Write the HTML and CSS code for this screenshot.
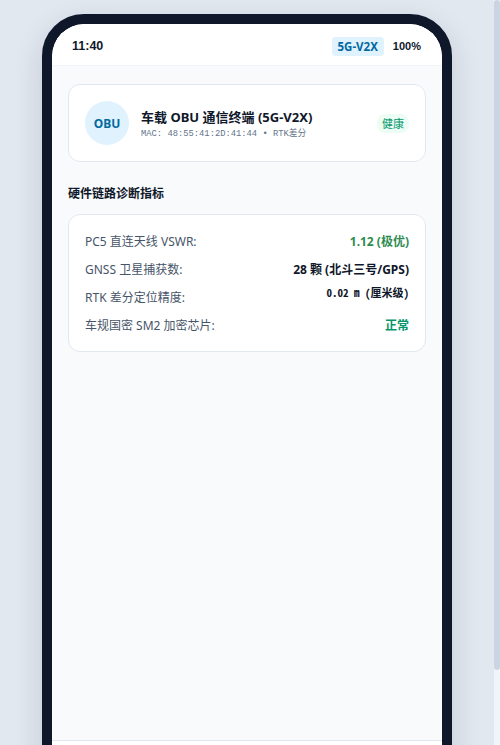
FILE: index.html
```html
<!DOCTYPE html>
<html lang="zh-CN">
<head>
<meta charset="utf-8">
<title>OBU 诊断</title>
<link rel="stylesheet" href="styles.css">
</head>
<body>
<div class="phone">
  <div class="screen">
    <div class="status">
      <span class="time">11:40</span>
      <div class="status-right">
        <span class="net">5G-V2X</span>
        <span class="batt">100%</span>
      </div>
    </div>
    <div class="content">
      <div class="card device">
        <div class="avatar">OBU</div>
        <div class="dev-info">
          <div class="dev-title">车载 OBU 通信终端 (5G-V2X)</div>
          <div class="dev-sub">MAC: 48:55:41:2D:41:44 • RTK差分</div>
        </div>
        <span class="health">健康</span>
      </div>
      <div class="section-title">硬件链路诊断指标</div>
      <div class="card metrics">
        <div class="row"><span class="label">PC5 直连天线 VSWR:</span><span class="val good">1.12 (极优)</span></div>
        <div class="row"><span class="label">GNSS 卫星捕获数:</span><span class="val">28 颗 (北斗三号/GPS)</span></div>
        <div class="row"><span class="label">RTK 差分定位精度:</span><span class="val mono">0.02 m (厘米级)</span></div>
        <div class="row"><span class="label">车规国密 SM2 加密芯片:</span><span class="val ok">正常</span></div>
      </div>
    </div>
    <div class="nav"></div>
  </div>
</div>
<div class="scrollbar"><div class="thumb"></div></div>
</body>
</html>
```
FILE: styles.css
```css
html { scrollbar-width: none; }
::-webkit-scrollbar { display: none; }

body {
  margin: 0;
  padding: 14px 6px 14px 0;
  background: #e2e8f0;
  font-family: "Noto Sans", "Noto Sans CJK SC", sans-serif;
  color: #0f172a;
  display: flex;
  justify-content: center;
}

.scrollbar {
  position: fixed;
  top: 0;
  right: 0;
  width: 6px;
  height: 100vh;
  background: #f1f5f9;
}

.thumb {
  height: 670px;
  background: #cbd5e1;
  border-radius: 3px;
}

.phone {
  width: 390px;
  height: 780px;
  flex: none;
  border: 10px solid #0f172a;
  border-radius: 42px;
  background: #0f172a;
  box-shadow: 0 10px 30px rgba(15, 23, 42, 0.14);
  overflow: hidden;
}

.screen {
  height: 100%;
  display: flex;
  flex-direction: column;
  background: #f8fafc;
  border-radius: 32px;
  overflow: hidden;
}

.status {
  height: 38px;
  flex: none;
  background: #fff;
  border-bottom: 1px solid #f1f5f9;
  display: flex;
  align-items: center;
  justify-content: space-between;
  padding: 3px 21px 0 20px;
}

.time {
  font-size: 12.5px;
  font-weight: 700;
  font-family: "Liberation Sans", "Noto Sans", sans-serif;
}

.status-right {
  display: flex;
  align-items: center;
  gap: 9px;
}

.net {
  background: #e0f2fe;
  color: #0369a1;
  font-size: 11.5px;
  font-weight: 700;
  padding: 2px 6px;
  border-radius: 4px;
  line-height: 15px;
}

.batt {
  font-size: 11px;
  font-weight: 600;
  font-family: "Liberation Sans", "Noto Sans", sans-serif;
}

.content {
  flex: 1;
  padding: 18px 16px;
}

.card {
  background: #fff;
  border: 1px solid #e2e8f0;
  border-radius: 12px;
}

.device {
  display: flex;
  align-items: center;
  padding: 16px;
  gap: 12px;
}

.avatar {
  width: 44px;
  height: 44px;
  border-radius: 50%;
  background: #e0f2fe;
  color: #0369a1;
  font-weight: 700;
  font-size: 12px;
  display: flex;
  align-items: center;
  justify-content: center;
  flex: none;
}

.dev-info {
  flex: 1;
  padding-top: 3px;
}

.dev-title {
  font-size: 13px;
  font-weight: 700;
  line-height: 17px;
}

.dev-sub {
  font-family: "Liberation Mono", "Noto Sans CJK SC", monospace;
  font-size: 8.8px;
  color: #64748b;
  line-height: 12px;
  margin-top: 2px;
}

.health {
  background: #ecfdf5;
  color: #059669;
  font-size: 11px;
  padding: 1px 5px;
  border-radius: 8px;
  line-height: 17px;
}

.section-title {
  font-size: 12px;
  font-weight: 700;
  margin: 22px 0 10px;
  line-height: 20px;
}

.metrics {
  padding: 16px;
  display: flex;
  flex-direction: column;
  gap: 8px;
}

.row {
  display: flex;
  justify-content: space-between;
  align-items: center;
  height: 20px;
  font-size: 12px;
}

.label { color: #475569; }

.val { font-weight: 700; color: #0f172a; }
.val.good { color: #15803d; opacity: 0.9; }
.val.ok { color: #059669; }
.val.mono {
  font-family: "Noto Sans Mono CJK SC", "Noto Sans CJK SC", monospace;
  font-size: 11px;
  margin-top: -11px;
}

.nav {
  height: 63px;
  flex: none;
  background: #fff;
  border-top: 1px solid #e2e8f0;
}
```
